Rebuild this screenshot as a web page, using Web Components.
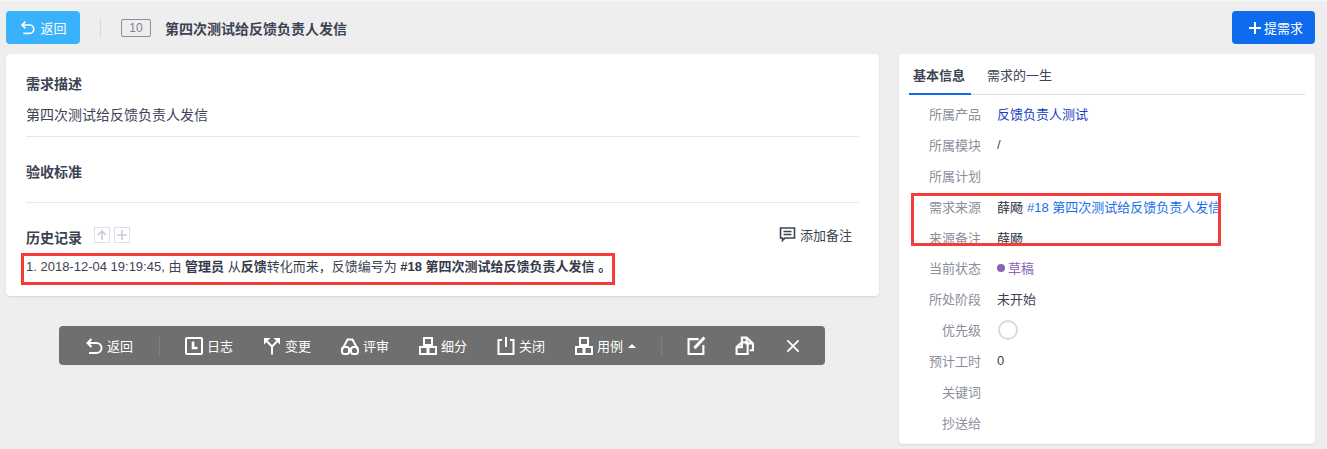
<!DOCTYPE html>
<html lang="zh">
<head>
<meta charset="utf-8">
<title>需求详情</title>
<style>
    html, body { margin: 0; height: 449px; overflow: hidden; }
    body {
        background: #eeeeee;
        border-top: 1px solid #f6f6f6;
        box-sizing: border-box;
        font: 13px "Liberation Sans", "Noto Sans CJK SC", sans-serif;
        color: #3c4353;
    }
</style>
</head>
<body>
<story-page></story-page>

<script>
const ICONS = {
    back: '<path d="M6.500 2 2.500 6l4 4M3 6h8.500a5 5 0 0 1 0 10H4"/>',
    log: '<rect x="1" y="1" width="16" height="16" rx="1"/><path d="M8 4.500V11h4.500" stroke-width="2.600"/>',
    change: '<path d="M9 17.500V9.500L4 4.500M9 9.500l5-5"/><path d="M1 1h6.500L1 7.500zM17 1h-6.500L17 7.500z" fill="currentColor" stroke="none"/>',
    review: '<rect x="1" y="10" width="7" height="7" rx="2.500"/><rect x="10" y="10" width="7" height="7" rx="2.500"/><path d="M1.500 12 6.500 2.500h5L16.500 12M8 12.500h2"/>',
    split: '<rect x="5" y="1" width="8" height="7"/><rect x="1" y="10" width="7.500" height="7"/><rect x="9.500" y="10" width="7.500" height="7"/>',
    close: '<path d="M5 3H1.500v14h15V3H13M9 0v10"/>',
    edit: '<path d="M15.500 8.500V17H1.500V3H11"/><path d="M7 11.500 16.500 1.500" stroke-width="2.800"/>',
    copy: '<path d="M6.500 6H12v11H1.500V10.500zM6.500 6v4.500h-5M6.500 5V1.500H11L17 7v6.500h-3M11 2v5h6"/>',
    cross: '<path d="M1.500 1.500l12 12M13.500 1.500l-12 12"/>'
};

class XIcon extends HTMLElement {
    connectedCallback() {
        const name = this.getAttribute('name');
        const box = name === 'cross' ? '0 0 15 15' : '0 0 18 18';
        const size = this.getAttribute('size') || 18;
        this.attachShadow({ mode: 'open' }).innerHTML = `
            <style>
                :host { display: inline-flex; flex: none; }
                svg { display: block; fill: none; stroke: currentColor; stroke-width: 2; }
            </style>
            <svg width="${size}" height="${size}" viewBox="${box}">${ICONS[name]}</svg>
        `;
    }
}

class XButton extends HTMLElement {
    constructor() {
        super();
        this.attachShadow({ mode: 'open' }).innerHTML = `
            <style>
                :host {
                    display: inline-flex;
                    align-items: center;
                    justify-content: center;
                    height: 33px;
                    box-sizing: border-box;
                    border-radius: 4px;
                    color: #fff;
                    background: var(--bg, #38b2fb);
                    font-size: 13px;
                }
            </style>
            <slot></slot>
        `;
    }
}

class TopBar extends HTMLElement {
    constructor() {
        super();
        this.attachShadow({ mode: 'open' }).innerHTML = `
            <style>
                :host {
                    display: flex;
                    align-items: center;
                    height: 33px;
                    margin: 10px 12px 10px 6px;
                }
                .divider { width: 1px; height: 20px; background: #d9d9d9; margin: 0 20px; }
                .badge {
                    width: 30px;
                    height: 18px;
                    box-sizing: border-box;
                    border: 1px solid #8b8f9c;
                    border-radius: 2px;
                    color: #7f8491;
                    font-size: 12px;
                    line-height: 16px;
                    text-align: center;
                    margin-right: 14px;
                }
                .title { font-size: 14px; font-weight: bold; color: #3c4353; flex: 1; }
                .back { width: 74px; }
                .add { width: 83px; }
                .inner { display: flex; align-items: center; }
                .plus { width: 14px; height: 14px; fill: none; stroke: #fff; stroke-width: 2; }
            </style>
            <x-button class="back"><span class="inner" style="gap:5px;margin-left:1px">
                <x-icon name="back" size="15"></x-icon>返回</span></x-button>
            <div class="divider"></div>
            <div class="badge">10</div>
            <div class="title">第四次测试给反馈负责人发信</div>
            <x-button class="add" style="--bg:#0f6bed"><span class="inner" style="gap:2px;margin-left:4px">
                <svg class="plus" viewBox="0 0 14 14"><path d="M7 1v12M1 7h12"/></svg>提需求</span></x-button>
        `;
    }
}

class DetailCard extends HTMLElement {
    constructor() {
        super();
        this.attachShadow({ mode: 'open' }).innerHTML = `
            <style>
                :host {
                    display: block;
                    position: relative;
                    height: 242px;
                    box-sizing: border-box;
                    padding: 20px 20px 0;
                    background: #fff;
                    border-radius: 4px;
                    box-shadow: 0 1px 2px rgba(0,0,0,.1);
                }
                h3 { margin: 0; font-size: 14px; line-height: 20px; font-weight: bold; color: #3c4353; }
                .desc { font-size: 14px; line-height: 20px; margin-top: 11px; padding-bottom: 11px; border-bottom: 1px solid #e8e8ea; }
                .empty { margin-top: 25px; height: 39px; padding-bottom: 1px; border-bottom: 1px solid #e8e8ea; }
                .history { display: flex; align-items: center; margin-top: 24px; height: 20px; }
                .history h3 { margin-right: 12px; position: relative; top: 1px; }
                .mini {
                    width: 14px; height: 14px; margin-right: 4px;
                    border: 1px solid #dcdfe6;
                    display: flex; align-items: center; justify-content: center;
                    position: relative; top: -2px;
                }
                .mini svg { display: block; fill: none; stroke: #c6cbd6; stroke-width: 1.6; }
                .comment { margin-left: auto; margin-right: 7px; display: flex; align-items: center; gap: 4px; color: #3c4353; position: relative; top: -3px; }
                .comment svg { display: block; fill: none; stroke: #3c4353; stroke-width: 1.6; }
                ol { margin: 10px 0 0; padding: 0; list-style: none; line-height: 20px; white-space: nowrap; }
                b { font-weight: bold; color: #333a49; }
                .mark { position: absolute; left: 15px; top: 199px; width: 594px; height: 32px; box-sizing: border-box; border: 3px solid #f73a3a; }
            </style>
            <h3>需求描述</h3>
            <div class="desc">第四次测试给反馈负责人发信</div>
            <div class="empty"><h3>验收标准</h3></div>
            <div class="history">
                <h3>历史记录</h3>
                <span class="mini"><svg width="12" height="12" viewBox="0 0 12 12"><path d="M6 11V2M2 6l4-4 4 4"/></svg></span>
                <span class="mini"><svg width="12" height="12" viewBox="0 0 12 12"><path d="M6 1v10M1 6h10"/></svg></span>
                <span class="comment">
                    <svg width="17" height="15" viewBox="0 0 17 15"><path d="M1.500 1h14v10H6l-2.500 2.500V11h-2zM4.500 4.500h8M4.500 7.500h8"/></svg>
                    添加备注
                </span>
            </div>
            <ol>
                <li>1. 2018-12-04 19:19:45, 由 <b>管理员</b> 从<b>反馈</b>转化而来，反馈编号为 <b>#18 第四次测试给反馈负责人发信 。</b></li>
            </ol>
            <div class="mark"></div>
        `;
    }
}

class ToolItem extends HTMLElement {
    connectedCallback() {
        const icon = this.getAttribute('icon');
        this.attachShadow({ mode: 'open' }).innerHTML = `
            <style>
                :host { display: inline-flex; align-items: center; gap: 4px; color: #fff; font-size: 13px; }
                .caret { width: 0; height: 0; margin-left: 1px; border: 4px solid transparent; border-top: 0; border-bottom: 4px solid #fff; }
            </style>
            <x-icon name="${icon}" size="${this.getAttribute('size') || 18}"></x-icon>
            <slot></slot>
            ${this.hasAttribute('caret') ? '<span class="caret"></span>' : ''}
        `;
    }
}

class ActionBar extends HTMLElement {
    constructor() {
        super();
        this.attachShadow({ mode: 'open' }).innerHTML = `
            <style>
                :host {
                    display: flex;
                    align-items: center;
                    width: 766px;
                    height: 39px;
                    box-sizing: border-box;
                    margin: 30px 0 0 53px;
                    padding-left: 26px;
                    background: #6f6f6f;
                    border-radius: 4px;
                    gap: 30px;
                }
                .sep { width: 1px; height: 20px; background: #808080; margin: 0 -5px; }
                .first { margin-right: 1px; }
                .copy { margin-left: -1px; }
                .x { margin-left: 2px; }
            </style>
            <tool-item class="first" icon="back">返回</tool-item>
            <span class="sep"></span>
            <tool-item icon="log">日志</tool-item>
            <tool-item icon="change">变更</tool-item>
            <tool-item icon="review">评审</tool-item>
            <tool-item icon="split">细分</tool-item>
            <tool-item icon="close">关闭</tool-item>
            <tool-item icon="split" caret>用例</tool-item>
            <span class="sep"></span>
            <tool-item icon="edit" size="19"></tool-item>
            <tool-item class="copy" icon="copy" size="19"></tool-item>
            <tool-item class="x" icon="cross" size="14"></tool-item>
        `;
    }
}

class InfoRow extends HTMLElement {
    connectedCallback() {
        this.attachShadow({ mode: 'open' }).innerHTML = `
            <style>
                :host { display: flex; align-items: center; height: 30.900px; color: #3c4353; white-space: nowrap; }
                .label { width: 56px; text-align: right; color: #8b8f9c; margin-right: 16px; flex: none; }
            </style>
            <span class="label">${this.getAttribute('label')}</span>
            <slot></slot>
        `;
    }
}

class SideCard extends HTMLElement {
    constructor() {
        super();
        this.attachShadow({ mode: 'open' }).innerHTML = `
            <style>
                :host {
                    display: block;
                    position: relative;
                    height: 390px;
                    box-sizing: border-box;
                    padding: 0 10px;
                    background: #fff;
                    border-radius: 4px;
                    box-shadow: 0 1px 2px rgba(0,0,0,.1);
                }
                .tabs { display: flex; height: 40px; border-bottom: 1px solid #dcdde1; margin-bottom: 3px; }
                .tab { padding: 0 4px; line-height: 43px; }
                .on { width: 54px; font-weight: bold; border-bottom: 2px solid #0f6bed; height: 39px; color: #3c4353; margin-right: 12px; }
                .main { margin-left: 16px; }
                .link { color: #1a3fbf; }
                .source { color: #1a6ee8; margin-left: 4px; }
                .dark { color: #2b3240; }
                .draft { color: #8a63b8; display: flex; align-items: center; gap: 3px; }
                .dot { width: 8px; height: 8px; border-radius: 50%; background: #8a63b8; }
                .pri { width: 16px; height: 16px; margin-left: 1px; border: 2px solid #d8dbe3; border-radius: 50%; }
                .mark { position: absolute; left: 12px; top: 139px; width: 310px; height: 53px; box-sizing: border-box; border: 3px solid #f73a3a; }
            </style>
            <div class="tabs">
                <div class="tab on">基本信息</div>
                <div class="tab">需求的一生</div>
            </div>
            <div class="main">
            <info-row label="所属产品"><span class="link">反馈负责人测试</span></info-row>
            <info-row label="所属模块">/</info-row>
            <info-row label="所属计划"></info-row>
            <info-row label="需求来源"><span class="dark">薛飏</span><span class="source">#18 第四次测试给反馈负责人发信</span></info-row>
            <info-row label="来源备注"><span class="dark">薛飏</span></info-row>
            <info-row label="当前状态"><span class="draft"><span class="dot"></span>草稿</span></info-row>
            <info-row label="所处阶段">未开始</info-row>
            <info-row label="优先级"><span class="pri"></span></info-row>
            <info-row label="预计工时">0</info-row>
            <info-row label="关键词"></info-row>
            <info-row label="抄送给"></info-row>
            </div>
            <div class="mark"></div>
        `;
    }
}

class StoryPage extends HTMLElement {
    constructor() {
        super();
        this.attachShadow({ mode: 'open' }).innerHTML = `
            <style>
                :host { display: block; }
                .cols { display: grid; grid-template-columns: 873px 416px; column-gap: 20px; margin-left: 6px; }
            </style>
            <top-bar></top-bar>
            <div class="cols">
                <div>
                    <detail-card></detail-card>
                    <action-bar></action-bar>
                </div>
                <side-card></side-card>
            </div>
        `;
    }
}

customElements.define('x-icon', XIcon);
customElements.define('x-button', XButton);
customElements.define('top-bar', TopBar);
customElements.define('detail-card', DetailCard);
customElements.define('tool-item', ToolItem);
customElements.define('action-bar', ActionBar);
customElements.define('info-row', InfoRow);
customElements.define('side-card', SideCard);
customElements.define('story-page', StoryPage);
</script>
</body>
</html>
